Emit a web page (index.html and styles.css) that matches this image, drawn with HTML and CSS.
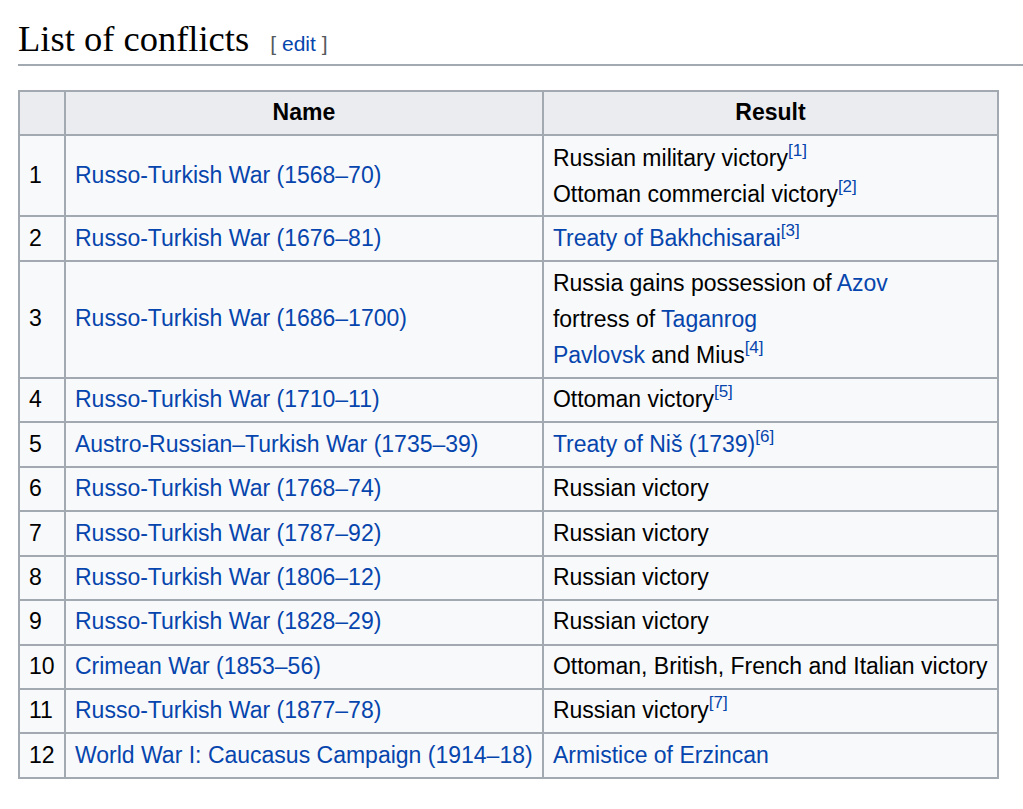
FILE: index.html
```html
<!DOCTYPE html>
<html lang="en">
<head>
<meta charset="utf-8">
<title>List of conflicts</title>
<link rel="stylesheet" href="styles.css">
</head>
<body>
<div class="content">
  <h2 class="heading"><span class="headline">List of conflicts</span><span class="editsection"><span class="bracket">[</span><a href="#">edit</a><span class="bracket">]</span></span></h2>
  <table class="wikitable">
    <thead>
      <tr><th class="c-num"></th><th class="c-name">Name</th><th class="c-result">Result</th></tr>
    </thead>
    <tbody>
      <tr><td>1</td><td><a href="#">Russo-Turkish War (1568–70)</a></td><td class="multi"><div>Russian military victory<sup><a href="#">[1]</a></sup></div><div>Ottoman commercial victory<sup><a href="#">[2]</a></sup></div></td></tr>
      <tr><td>2</td><td><a href="#">Russo-Turkish War (1676–81)</a></td><td><a href="#">Treaty of Bakhchisarai</a><sup><a href="#">[3]</a></sup></td></tr>
      <tr><td>3</td><td><a href="#">Russo-Turkish War (1686–1700)</a></td><td class="multi"><div>Russia gains possession of <a href="#">Azov</a></div><div>fortress of <a href="#">Taganrog</a></div><div><a href="#">Pavlovsk</a> and Mius<sup><a href="#">[4]</a></sup></div></td></tr>
      <tr><td>4</td><td><a href="#">Russo-Turkish War (1710–11)</a></td><td>Ottoman victory<sup><a href="#">[5]</a></sup></td></tr>
      <tr><td>5</td><td><a href="#">Austro-Russian–Turkish War (1735–39)</a></td><td><a href="#">Treaty of Niš (1739)</a><sup><a href="#">[6]</a></sup></td></tr>
      <tr><td>6</td><td><a href="#">Russo-Turkish War (1768–74)</a></td><td>Russian victory</td></tr>
      <tr><td>7</td><td><a href="#">Russo-Turkish War (1787–92)</a></td><td>Russian victory</td></tr>
      <tr><td>8</td><td><a href="#">Russo-Turkish War (1806–12)</a></td><td>Russian victory</td></tr>
      <tr><td>9</td><td><a href="#">Russo-Turkish War (1828–29)</a></td><td>Russian victory</td></tr>
      <tr><td>10</td><td><a href="#">Crimean War (1853–56)</a></td><td>Ottoman, British, French and Italian victory</td></tr>
      <tr><td>11</td><td><a href="#">Russo-Turkish War (1877–78)</a></td><td>Russian victory<sup><a href="#">[7]</a></sup></td></tr>
      <tr><td>12</td><td><a href="#">World War I: Caucasus Campaign (1914–18)</a></td><td><a href="#">Armistice of Erzincan</a></td></tr>
    </tbody>
  </table>
</div>
</body>
</html>
```
FILE: styles.css
```css
html, body {
  margin: 0;
  padding: 0;
  background: #ffffff;
}

body {
  font-family: "Liberation Sans", Arial, sans-serif;
  color: #000000;
}

.content {
  padding: 20px 0 0 18px;
}

.heading {
  margin: 0;
  padding: 0 0 6px 0;
  border-bottom: 2px solid #a2a9b1;
  font-weight: normal;
  display: flex;
  align-items: baseline;
  gap: 21px;
}

.headline {
  font-family: "Liberation Serif", "Times New Roman", serif;
  font-size: 36.5px;
  line-height: 38px;
  color: #000;
}

.editsection {
  font-family: "Liberation Sans", Arial, sans-serif;
  font-size: 21px;
  color: #54595d;
  display: inline-flex;
  gap: 6px;
}

.editsection a {
  color: #0645ad;
  text-decoration: none;
}

.wikitable {
  margin-top: 24px;
  border-collapse: collapse;
  border: 2px solid #a2a9b1;
  background: #f8f9fa;
  font-size: 23px;
  width: 981px;
}

.wikitable th,
.wikitable td {
  border: 2px solid #a2a9b1;
  padding: 3.45px 9px;
  line-height: 35.6px;
  text-align: left;
  vertical-align: middle;
}

.wikitable th {
  background: #eaecf0;
  text-align: center;
  font-weight: bold;
}

.wikitable td.multi {
  line-height: 36px;
}

.c-num { width: 26px; }
.c-name { width: 459px; }
.c-result { width: 436px; }

.wikitable a {
  color: #0645ad;
  text-decoration: none;
}

.wikitable sup {
  font-size: 17px;
  line-height: 1;
  vertical-align: 10px;
}
```
